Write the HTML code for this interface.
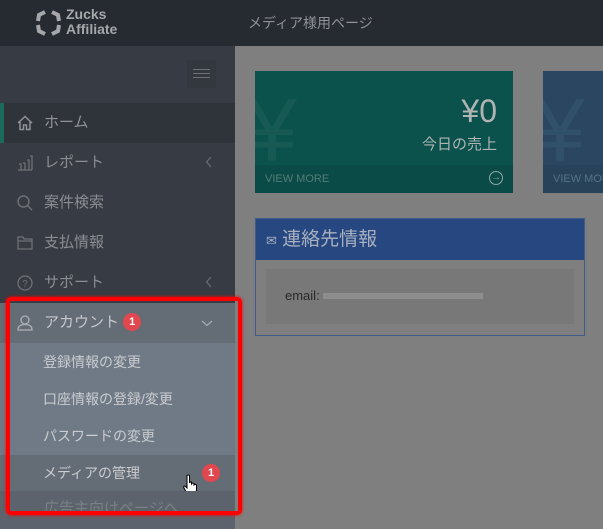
<!DOCTYPE html>
<html><head><meta charset="utf-8"><style>
*{margin:0;padding:0;box-sizing:border-box}
body{width:603px;height:529px;overflow:hidden;background:#7f7f7f;font-family:"Liberation Sans","Noto Sans CJK JP",sans-serif;position:relative}
.hdr{position:absolute;left:0;top:0;width:603px;height:46px;background:#262a31}
.side{position:absolute;left:0;top:46px;width:235px;height:483px;background:#373b43}
.it{position:absolute;left:0;width:235px;height:40px;color:#8a8d92;font-size:15px;line-height:40px;padding-left:44px}
.ic{position:absolute;left:17px;top:12px}
.chev{position:absolute;right:22px;top:13px}
.sub{position:absolute;left:43px;color:#c9ccd0;font-size:14px}
.badge{display:inline-block;width:18px;height:18px;border-radius:9px;background:#e0474f;color:#fff;font-size:11px;line-height:18px;text-align:center;font-weight:bold;vertical-align:2px}
</style></head><body>
<div class="hdr">
<svg style="position:absolute;left:35px;top:9px" width="27" height="28" viewBox="0 0 27 28"><g fill="none" stroke="#a5a7ab" stroke-width="4"><path d="M10 3 L4 6 L3 12 M3 16 L4 22 L10 25 M17 25 L23 22 L24 16 M24 12 L23 6 L17 3"/></g></svg>
<div style="position:absolute;left:66px;top:7px;color:#a5a7ab;font-weight:bold;font-size:14px;line-height:15px">Zucks<br>Affiliate</div>
<div style="position:absolute;left:248px;top:13px;color:#8f9196;font-size:14px">メディア様用ページ</div>
</div>
<div class="side">
<div style="position:absolute;left:187px;top:14px;width:29px;height:28px;background:#33373e"><div style="margin:9px 6px;height:9px;border-top:1px solid #6d7076;border-bottom:1px solid #6d7076;position:relative"><div style="position:absolute;top:3px;left:0;right:0;border-top:1px solid #6d7076"></div></div></div>
</div>
<div class="it" style="top:103px;background:#2f333a;color:#8f9297"><div style="position:absolute;left:0;top:0;width:4px;height:40px;background:#1a6b5c"></div>
<svg class="ic" width="16" height="16" viewBox="0 0 16 16" fill="none" stroke="#8f9297" stroke-width="1.5"><path d="M1 8 L8 1.5 L15 8 M3 7 V14.5 H6.5 V10 H9.5 V14.5 H13 V7"/></svg>ホーム</div>
<div class="it" style="top:143px"><svg class="ic" width="16" height="16" viewBox="0 0 16 16" fill="none" stroke="#6e7176" stroke-width="1.3"><path d="M1 15 H15 M2 9 H4 V15 M6 8 H8 V15 M10 5 H12 V15 M13 1 H15 V15"/></svg>レポート<svg class="chev" width="8" height="12" viewBox="0 0 8 12"><path d="M6 1 L1.5 6 L6 11" fill="none" stroke="#6a6d72" stroke-width="1.2"/></svg></div>
<div class="it" style="top:183px"><svg class="ic" width="16" height="16" viewBox="0 0 16 16" fill="none" stroke="#6e7176" stroke-width="1.4"><circle cx="6.5" cy="6.5" r="5.5"/><path d="M10.5 10.5 L15 15"/></svg>案件検索</div>
<div class="it" style="top:223px"><svg class="ic" width="16" height="16" viewBox="0 0 16 16" fill="none" stroke="#6e7176" stroke-width="1.3"><path d="M1 2 H6 L7 4 H15 V14 H1 Z M1 6 H15"/></svg>支払情報</div>
<div class="it" style="top:263px"><svg class="ic" width="16" height="16" viewBox="0 0 16 16" fill="none" stroke="#6e7176" stroke-width="1.3"><circle cx="8" cy="8" r="7"/><text x="8" y="12" font-size="10" fill="#6e7176" stroke="none" text-anchor="middle" font-family="Liberation Sans">?</text></svg>サポート<svg class="chev" width="8" height="12" viewBox="0 0 8 12"><path d="M6 1 L1.5 6 L6 11" fill="none" stroke="#6a6d72" stroke-width="1.2"/></svg></div>
<div class="it" style="top:303px;background:#646c75;color:#c5c8cc"><svg class="ic" width="16" height="16" viewBox="0 0 16 16" fill="none" stroke="#aeb2b7" stroke-width="1.3"><circle cx="8" cy="5" r="4"/><path d="M1 15 Q1 9.5 8 9.5 Q15 9.5 15 15 Z"/></svg>アカウント <span class="badge">1</span><svg class="chev" style="top:16px" width="12" height="8" viewBox="0 0 12 8"><path d="M1 2 L6 6.5 L11 2" fill="none" stroke="#a9adb2" stroke-width="1.2"/></svg></div>
<div style="position:absolute;left:0;top:343px;width:235px;height:112px;background:#707a86"></div>
<div class="sub" style="top:352px">登録情報の変更</div>
<div class="sub" style="top:389px">口座情報の登録/変更</div>
<div class="sub" style="top:426px">パスワードの変更</div>
<div style="position:absolute;left:0;top:455px;width:235px;height:36px;background:#646c75"></div>
<div class="sub" style="top:463px">メディアの管理</div>
<span class="badge" style="position:absolute;left:202px;top:464px">1</span>
<svg style="position:absolute;left:182px;top:474px" width="18" height="22" viewBox="0 0 18 22"><path d="M5 1.5 Q6.5 0.5 7.5 1.5 V9 Q8 7.5 9.5 8 V10 Q10.5 8.5 12 9.5 V11 Q13 10 14.5 11 V16 Q14 20 11 21 H7 Q5 20 2 14 Q1 12 3 12 L5 14 Z" fill="#fff" stroke="#000" stroke-width="1"/></svg>
<div style="position:absolute;left:0;top:491px;width:235px;height:38px;background:#5c636c"></div>
<div class="it" style="top:491px;color:#7b8087;height:24px;line-height:36px;overflow:hidden">広告主向けページへ</div>
<div style="position:absolute;left:6px;top:297px;width:236px;height:218px;border:4px solid #ff0000;border-radius:5px;box-shadow:0 0 3px #f00"></div>
<div style="position:absolute;left:255px;top:71px;width:258px;height:122px;background:#0b524d;overflow:hidden">
<div style="position:absolute;left:-8px;top:10px;font-size:90px;color:#175a54;line-height:100px">¥</div>
<div style="position:absolute;right:16px;top:22px;color:#b0b4b3;font-size:32px">¥0</div>
<div style="position:absolute;right:16px;top:62px;color:#b0b4b3;font-size:15px">今日の売上</div>
<div style="position:absolute;left:0;bottom:0;width:258px;height:28px;background:#0a4b47"></div>
<div style="position:absolute;left:10px;top:102px;color:#527d79;font-size:11px">VIEW MORE</div>
<div style="position:absolute;right:10px;top:100px;width:14px;height:14px;border:1px solid #8ea6a4;border-radius:50%;color:#8ea6a4;font-size:10px;line-height:12px;text-align:center">→</div>
</div>
<div style="position:absolute;left:543px;top:71px;width:70px;height:122px;background:#2a4660;overflow:hidden">
<div style="position:absolute;left:-8px;top:10px;font-size:90px;color:#31506a;line-height:100px">¥</div>
<div style="position:absolute;left:0;bottom:0;width:70px;height:28px;background:#284259"></div>
<div style="position:absolute;left:10px;top:102px;color:#55728b;font-size:11px;white-space:nowrap">VIEW MORE</div></div>
<div style="position:absolute;left:255px;top:218px;width:330px;height:118px;border:1px solid #3f5a8a">
<div style="height:41px;background:#264780;color:#a8b0c0;font-size:19px;line-height:41px;padding-left:10px"><span style="font-size:13px">✉</span> 連絡先情報</div>
<div style="position:absolute;left:10px;top:50px;width:308px;height:55px;background:#787878;padding:19px 0 0 19px;font-size:13px;color:#2a2a2a">email: <span style="display:inline-block;width:160px;height:6px;background:#8d8d8d;vertical-align:1px"></span></div>
</div>
</body></html>
